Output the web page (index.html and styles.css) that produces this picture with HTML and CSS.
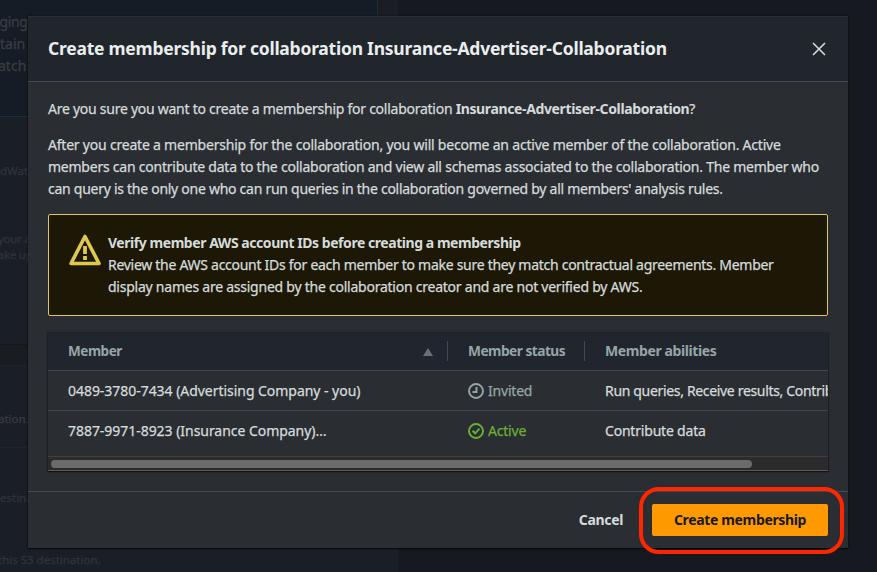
FILE: index.html
```
<!DOCTYPE html>
<html lang="en">
<head>
<meta charset="utf-8">
<title>Create membership</title>
<link rel="stylesheet" href="styles.css">
</head>
<body>
<main class="page">
  <div class="column">
    <section class="info">
      <p class="cut-7">aging -</p>
      <p>tain</p>
      <p class="cut-2">atch</p>
    </section>
    <section class="panel panel-first">
      <p class="log">dWatch</p>
      <p class="note cut-2">your account</p>
      <p class="note cut-2">ake up to</p>
    </section>
    <section class="panel panel-second">
      <div class="bar"></div>
      <div class="row row-a"><p class="cut-2">ation.</p></div>
      <div class="row row-b">
        <p>estination</p>
        <p class="last cut-2">this S3 destination.</p>
      </div>
    </section>
  </div>
</main>

<div class="modal" role="dialog" aria-modal="true">
  <header class="modal-header">
    <h2>Create membership for collaboration Insurance-Advertiser-Collaboration</h2>
    <svg class="close" viewBox="0 0 16 16"><path d="M2 2l12 12M14 2L2 14"/></svg>
  </header>
  <div class="modal-body">
    <p class="question">Are you sure you want to create a membership for collaboration <b>Insurance-Advertiser-Collaboration</b>?</p>
    <p class="detail">
      <span class="t-p1">After you create a membership for the collaboration, you will become an active member of the collaboration. Active</span><br>
      <span class="t-p2">members can contribute data to the collaboration and view all schemas associated to the collaboration. The member who</span><br>
      <span class="t-p3">can query is the only one who can run queries in the collaboration governed by all members' analysis rules.</span>
    </p>
    <div class="alert">
      <svg class="warn" viewBox="0 0 32 32"><path class="tri" d="M16 2.500L30 29.500H2z"/><path class="mark" d="M16 12v8M16 22v4"/></svg>
      <div>
        <b class="t-a1">Verify member AWS account IDs before creating a membership</b><br>
        <span class="t-a2">Review the AWS account IDs for each member to make sure they match contractual agreements. Member</span><br>
        <span class="t-a3">display names are assigned by the collaboration creator and are not verified by AWS.</span>
      </div>
    </div>
    <div class="table">
      <div class="tr th">
        <div class="td"><span class="t-h1">Member</span><i class="sort"></i></div>
        <div class="td"><span class="t-h2">Member status</span></div>
        <div class="td"><span class="t-h3">Member abilities</span></div>
      </div>
      <div class="tr">
        <div class="td"><span class="t-r">0489-3780-7434 (Advertising Company - you)</span></div>
        <div class="td invited"><svg viewBox="0 0 16 16"><circle cx="8" cy="8" r="7"/><path d="M8.500 4v5H4.500"/></svg><span class="t-st">Invited</span></div>
        <div class="td"><span class="t-run">Run queries, Receive results, Contribute data</span></div>
      </div>
      <div class="tr">
        <div class="td"><span class="t-r">7887-9971-8923 (Insurance Company)…</span></div>
        <div class="td active"><svg viewBox="0 0 16 16"><circle cx="8" cy="8" r="7"/><path d="M4.500 7.700l2.700 2.600 4.300-4.600"/></svg><span class="t-st">Active</span></div>
        <div class="td"><span class="t-st">Contribute data</span></div>
      </div>
      <div class="scroll"><div class="thumb"></div></div>
    </div>
  </div>
  <footer class="modal-footer">
    <span class="cancel">Cancel</span>
    <div class="primary"><span>Create membership</span><div class="ring"></div></div>
  </footer>
</div>
</body>
</html>
```
FILE: styles.css
```
* { box-sizing: border-box; }
body {
  margin: 0;
  width: 877px;
  height: 572px;
  overflow: hidden;
  background: #161920;
  color: #d5dbdb;
  font: 14px/22px "Noto Sans", sans-serif;
  -webkit-text-stroke: 0.25px currentColor;
}
p, h2 { margin: 0; }
b { font-weight: 700; }
b, h2, .th, .modal-footer { -webkit-text-stroke-width: 0; }

.page { height: 572px; overflow: hidden; }
.column { width: 398px; height: 572px; background: #1a1d23; overflow: hidden; color: #393e42; white-space: nowrap; }
.info { width: 378px; height: 117px; padding-top: 11px; background: #151c26; border-right: 1px solid #10333e; border-bottom: 1px solid #10333e; }
.cut-2 { margin-left: -2px; }
.cut-7 { margin-left: -8px; letter-spacing: -0.4px; }
.panel { background: #1a1e27; font-size: 11.500px; line-height: 16px; color: #303439; }
.panel-first { height: 228px; padding-top: 46px; border-bottom: 1px solid #14171a; }
.log { margin-bottom: 52px; }
.note { letter-spacing: -0.3px; }
.panel-second { height: 227px; }
.bar { height: 21px; background: #191d22; border-bottom: 1px solid #1e232a; }
.row-a { height: 82px; padding-top: 45px; border-bottom: 1px solid #20252c; color: #383c40; }
.row-b { padding-top: 42px; }
.last { margin-top: 46px; }

.modal {
  position: absolute;
  left: 28px;
  top: 16px;
  width: 820px;
  height: 532px;
  background: #2a2e33;
  box-shadow: 0 1px 1px #08090b, 0 0 2px #0c0e11;
  white-space: nowrap;
  display: flex;
  flex-direction: column;
}
.modal-header {
  height: 66px;
  padding: 0 21px 0 20px;
  display: flex;
  align-items: center;
  justify-content: space-between;
  background: #21252c;
  border-top: 1px solid #2b2f33;
  border-bottom: 1px solid #444a50;
}
h2 { margin-top: -2px; font-size: 17.500px; line-height: 22px; letter-spacing: -0.24px; color: #eaeded; }
.close { width: 16px; height: 16px; fill: none; stroke: #d5dbdb; stroke-width: 1.600; }
.modal-body { height: 409px; padding: 16px 20px 0; }
.question { margin-bottom: 14px; letter-spacing: -0.26px; }
.question b { letter-spacing: -0.37px; }
.detail { margin-bottom: 14px; }
.t-p1 { letter-spacing: -0.21px; }
.t-p2 { letter-spacing: -0.235px; }
.t-p3 { letter-spacing: -0.27px; }
.alert {
  height: 102px;
  padding: 17px 20px;
  display: flex;
  gap: 7px;
  background: #1d1806;
  border: 1px solid #dfc852;
  border-radius: 2px;
}
.t-a1 { letter-spacing: -0.45px; }
.t-a2 { letter-spacing: -0.28px; }
.t-a3 { letter-spacing: -0.24px; }
.warn { width: 32px; height: 32px; margin-top: 2px; fill: none; stroke: #dfc852; }
.tri { stroke-width: 3.600; stroke-linejoin: round; }
.mark { stroke-width: 3.800; }

.table {
  height: 138px;
  margin-top: 17px;
  overflow: hidden;
  border-bottom: 1px solid #5a5b5c;
  box-shadow: 0 1px 1px #101214, 0 0 1px 1px #202428;
}
.tr {
  height: 40px;
  display: grid;
  grid-template-columns: 400px 137px 243px;
  border-bottom: 1px solid #414750;
}
.tr + .tr + .tr { border: 0; height: 45px; padding-bottom: 5px; }
.td { display: flex; align-items: center; padding-left: 20px; }
.th { height: 38px; background: #21252d; color: #95a5a6; font-weight: 700; }
.th span { margin-top: -2px; }
.th .td + .td { margin-left: -1px; padding-left: 21px; background: linear-gradient(#414750, #414750) 0 8px / 1px 20px no-repeat; }
.sort { margin-left: auto; margin-right: 15px; border: solid transparent; border-width: 0 5px 8px; border-bottom-color: #687078; }
.td svg { width: 16px; height: 16px; margin-right: 4px; fill: none; stroke: currentColor; stroke-width: 1.900; }
.t-h1 { font-size: 13.500px; letter-spacing: -0.45px; }
.t-h2 { font-size: 13.700px; letter-spacing: -0.5px; }
.t-h3 { letter-spacing: -0.4px; }
.t-r { letter-spacing: -0.04px; }
.t-st { letter-spacing: -0.2px; }
.t-run { letter-spacing: -0.33px; }
.invited { color: #95a5a6; }
.active { color: #6aaf35; }
.scroll { height: 15px; padding: 3px 3px; background: #2b2b2b; border-top: 1px solid #404040; }
.thumb { width: 701px; height: 8px; border-radius: 4px; background: #6b6b6b; }

.modal-footer {
  height: 57px;
  padding: 0 20px;
  display: flex;
  align-items: center;
  justify-content: flex-end;
  gap: 29px;
  border-top: 1px solid #444a50;
  font-weight: 700;
  letter-spacing: -0.35px;
}
.primary { position: relative; width: 176px; height: 32px; border-radius: 2px; background: #ff9900; color: #16191f; display: flex; align-items: center; justify-content: center; }
.ring { position: absolute; left: -13px; top: -17px; width: 205px; height: 67px; border: 4px solid #ff2600; border-radius: 20px; }
```
